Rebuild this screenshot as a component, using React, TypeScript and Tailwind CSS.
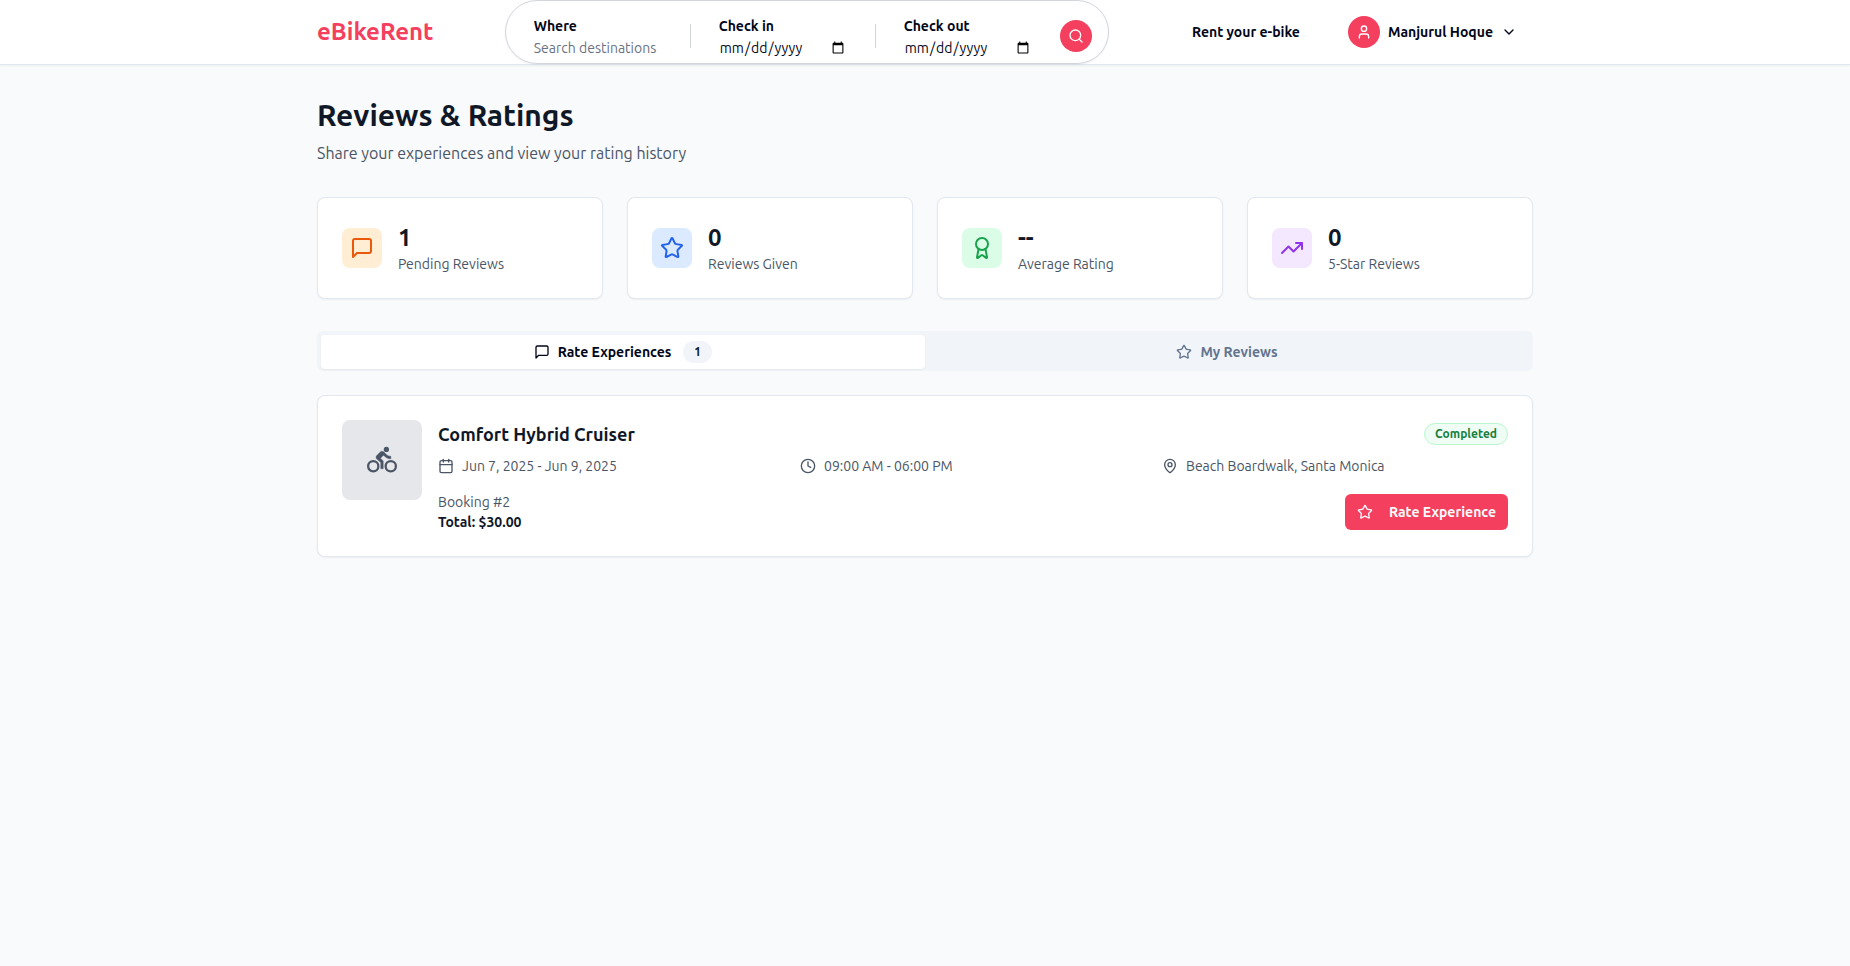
import type { ReactNode } from "react";
import { Award, Calendar, ChevronDown, Clock, MapPin, Search, Star, TrendingUp, User } from "lucide-react";

function MessageIcon({ className }: { className: string }) {
  return (
    <svg
      viewBox="0 0 24 24"
      fill="none"
      stroke="currentColor"
      strokeWidth={2}
      strokeLinecap="round"
      strokeLinejoin="round"
      aria-hidden="true"
      className={className}
    >
      <path d="M21 15a2 2 0 0 1-2 2H7l-4 4V5a2 2 0 0 1 2-2h14a2 2 0 0 1 2 2z" />
    </svg>
  );
}

function CyclistIcon({ className }: { className: string }) {
  return (
    <svg viewBox="0 0 24 24" fill="none" stroke="currentColor" aria-hidden="true" className={className}>
      <circle cx="5" cy="17" r="4.1" strokeWidth={1.8} />
      <circle cx="19" cy="17" r="4.1" strokeWidth={1.8} />
      <circle cx="15.5" cy="3.5" r="2.1" fill="currentColor" stroke="none" />
      <path
        d="M10.8 10.5l2.4-2.4.8.8c1.3 1.3 3 2.1 5.1 2.1V9c-1.5 0-2.7-.6-3.6-1.5l-1.9-1.9c-.5-.4-1-.6-1.6-.6s-1.1.2-1.4.6L7.8 8.4c-.4.4-.6.9-.6 1.4 0 .6.2 1.1.6 1.4L11 14v5h2v-6.2l-2.2-2.3z"
        fill="currentColor"
        strokeWidth={0.3}
      />
    </svg>
  );
}

function SearchBar() {
  return (
    <form
      role="search"
      className="ml-1 flex h-16 items-center rounded-full border border-gray-300 bg-white pt-2 pr-4 shadow-xs"
    >
      <div className="px-7 pt-1">
        <label htmlFor="where" className="block text-sm font-semibold leading-5">
          Where
        </label>
        <input
          id="where"
          type="text"
          placeholder="Search destinations"
          className="block h-6 w-32 bg-transparent text-sm outline-none placeholder:text-gray-500"
        />
      </div>
      <div className="h-6 w-px bg-gray-300" />
      <DateField id="check-in" label="Check in" />
      <div className="h-6 w-px bg-gray-300" />
      <DateField id="check-out" label="Check out" />
      <button
        type="submit"
        aria-label="Search"
        className="flex size-8 items-center justify-center rounded-full bg-[#f43f5e] text-white"
      >
        <Search className="size-4" />
      </button>
    </form>
  );
}

function DateField({ id, label }: { id: string; label: string }) {
  return (
    <div className="px-7 pt-1">
      <label htmlFor={id} className="block text-sm font-semibold leading-5">
        {label}
      </label>
      <input id={id} type="date" className="block h-6 w-32 bg-transparent text-sm outline-none" />
    </div>
  );
}

function Header() {
  return (
    <header className="border-b border-slate-200 bg-white shadow-xs">
      <div className="mx-auto flex h-16 max-w-7xl items-center justify-between px-8">
        <a href="#" className="text-2xl font-bold text-[#f43f5e]">
          eBikeRent
        </a>
        <SearchBar />
        <nav className="flex items-center gap-4 text-sm font-semibold">
          <a href="#" className="px-4 py-2">
            Rent your e-bike
          </a>
          <button type="button" className="flex items-center gap-2 px-4 py-2">
            <span className="flex size-8 items-center justify-center rounded-full bg-[#f43f5e] text-white">
              <User className="size-4" />
            </span>
            Manjurul Hoque
            <ChevronDown className="size-4" />
          </button>
        </nav>
      </div>
    </header>
  );
}

function StatCard({
  icon,
  tone,
  value,
  label,
}: {
  icon: ReactNode;
  tone: string;
  value: string;
  label: string;
}) {
  return (
    <div className="flex items-center rounded-lg border border-slate-200 bg-white p-6 shadow-xs">
      <div className={`flex size-10 items-center justify-center rounded-lg ${tone}`}>{icon}</div>
      <div className="ml-4">
        <p className="text-2xl font-bold text-gray-900">{value}</p>
        <p className="text-sm text-gray-600">{label}</p>
      </div>
    </div>
  );
}

function BookingCard() {
  return (
    <article className="mt-6 flex gap-4 rounded-lg border border-slate-200 bg-white p-6 shadow-xs">
      <div className="flex size-20 shrink-0 items-center justify-center rounded-lg bg-gray-200 text-gray-600">
        <CyclistIcon className="size-[30px]" />
      </div>
      <div className="flex-1">
        <div className="flex items-center justify-between">
          <h2 className="text-lg font-bold text-gray-900">Comfort Hybrid Cruiser</h2>
          <span className="rounded-full border border-green-200 bg-green-50 px-2.5 py-0.5 text-xs font-semibold text-[#15803d]">
            Completed
          </span>
        </div>
        <div className="mt-2 grid grid-cols-3 gap-4 text-sm text-gray-600">
          <div className="flex items-center gap-2">
            <Calendar className="size-4" />
            Jun 7, 2025 - Jun 9, 2025
          </div>
          <div className="flex items-center gap-2">
            <Clock className="size-4" />
            09:00 AM - 06:00 PM
          </div>
          <div className="flex items-center gap-2">
            <MapPin className="size-4" />
            Beach Boardwalk, Santa Monica
          </div>
        </div>
        <div className="mt-4 flex items-center justify-between text-sm">
          <div>
            <p className="text-gray-600">Booking #2</p>
            <p className="font-semibold text-gray-900">Total: $30.00</p>
          </div>
          <button
            type="button"
            className="flex h-9 items-center gap-4 rounded-md bg-[#f43f5e] px-3 font-semibold text-slate-50"
          >
            <Star className="size-4" />
            Rate Experience
          </button>
        </div>
      </div>
    </article>
  );
}

export default function App() {
  return (
    <div className="min-h-screen bg-gray-50 font-[Ubuntu,'Noto_Sans',sans-serif] text-slate-950">
      <Header />
      <main className="mx-auto max-w-7xl p-8">
        <h1 className="text-3xl font-bold text-gray-900">Reviews &amp; Ratings</h1>
        <p className="mt-2 text-gray-600">Share your experiences and view your rating history</p>

        <section className="mt-8 grid grid-cols-2 gap-6 lg:grid-cols-4">
          <StatCard
            icon={<MessageIcon className="size-6" />}
            tone="bg-orange-100 text-[#ea580c]"
            value="1"
            label="Pending Reviews"
          />
          <StatCard
            icon={<Star className="size-6" />}
            tone="bg-blue-100 text-[#2563eb]"
            value="0"
            label="Reviews Given"
          />
          <StatCard
            icon={<Award className="size-6" />}
            tone="bg-green-100 text-[#16a34a]"
            value="--"
            label="Average Rating"
          />
          <StatCard
            icon={<TrendingUp className="size-6" />}
            tone="bg-purple-100 text-[#9333ea]"
            value="0"
            label="5-Star Reviews"
          />
        </section>

        <div
          role="tablist"
          className="mt-8 grid h-10 grid-cols-2 items-center rounded-md bg-slate-100 p-1 text-sm font-semibold text-slate-500"
        >
          <button
            type="button"
            role="tab"
            aria-selected="true"
            className="flex items-center justify-center rounded-sm bg-white py-1.5 text-slate-950 shadow-xs"
          >
            <MessageIcon className="mr-2 size-4" />
            Rate Experiences
            <span className="ml-3 rounded-full border border-transparent bg-slate-100 px-2.5 py-0.5 text-xs font-semibold text-slate-900">
              1
            </span>
          </button>
          <button
            type="button"
            role="tab"
            aria-selected="false"
            className="flex items-center justify-center rounded-sm py-1.5"
          >
            <Star className="mr-2 size-4" />
            My Reviews
          </button>
        </div>

        <BookingCard />
      </main>
    </div>
  );
}
